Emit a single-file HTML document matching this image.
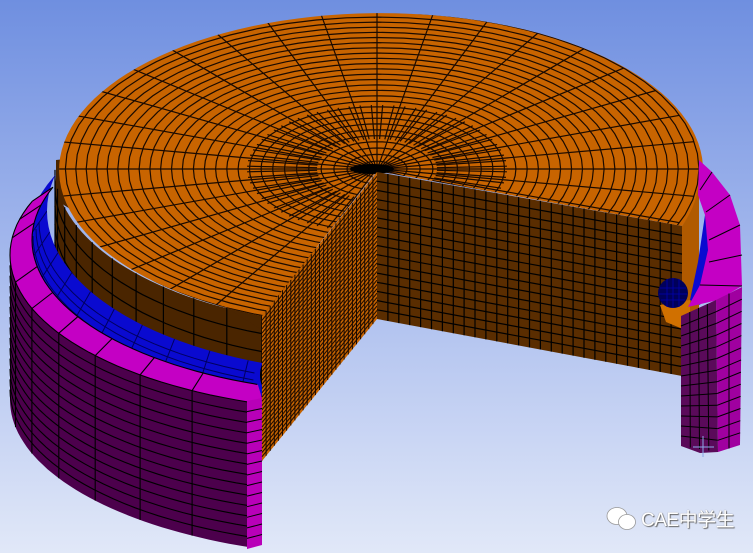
<!DOCTYPE html>
<html><head><meta charset="utf-8"><style>
html,body{margin:0;padding:0;width:753px;height:553px;overflow:hidden;background:#fff}
svg{display:block}
.wm{position:absolute;left:641px;top:505px;font:19px "Liberation Sans","Noto Sans CJK SC",sans-serif;color:#fff;text-shadow:1px 1px 1px #666,0 0 1px #888;letter-spacing:-0.5px}
</style></head><body>
<svg id="s" width="753" height="553" viewBox="0 0 753 553" xmlns="http://www.w3.org/2000/svg">
<defs>
<linearGradient id="bg" x1="0" y1="0" x2="0" y2="1">
<stop offset="0" stop-color="#6f8fe0"/><stop offset="0.5" stop-color="#a9bcee"/><stop offset="1" stop-color="#e1e8f8"/>
</linearGradient>
<clipPath id="ctop"><path d="M377,171 L262,316 A322 157 0 1 1 682,226 Z"/></clipPath>
<clipPath id="crect"><rect x="0" y="0" width="268" height="553"/></clipPath>
<clipPath id="cblue"><path clip-rule="evenodd" d="M0,0H753V553H0Z M47,211 A330 162 0 1 0 707,211 A330 162 0 1 0 47,211Z"/></clipPath>
</defs>
<rect width="753" height="553" fill="url(#bg)"/>
<path d="M55,169 A322 157 0 0 0 262,316 L262,461 A322 157 0 0 1 55,314 Z" fill="#4a2500"/>
<polygon points="56,160 150,150 320,250 262,330 56,200" fill="#4a2500"/>
<g id="sideg" stroke="#000" stroke-width="1.2" fill="none"></g>
<g clip-path="url(#crect)"><g clip-path="url(#cblue)"><ellipse cx="377" cy="240" rx="350" ry="165" fill="#0a0ad0"/>
<g id="blueg" stroke="#000060" stroke-width="1" fill="none"></g></g></g>
<path id="ringtop" fill="#c400c4"/>
<path id="ringside" fill="#4c004c"/>
<g id="ringg" stroke="#000" stroke-width="1.1" fill="none"></g>
<polygon points="247,401 262,398 262,545 247,549" fill="#b800b8"/>
<g id="ringend" stroke="#000" stroke-width="1" fill="none"></g>
<ellipse cx="266" cy="375" rx="6" ry="14" fill="#000"/>
<path d="M377,171 L262,316 A322 157 0 1 1 682,226 Z" fill="#c86400"/>
<g id="topg" clip-path="url(#ctop)" stroke="#1a0a00" stroke-width="1.2" fill="none"></g>
<ellipse cx="372" cy="169" rx="22" ry="5" fill="#000"/>
<polygon points="377,172 262,316 262,461 377,319" fill="#c46200"/>
<g id="lfg" stroke="#1a0a00" stroke-width="1" fill="none"></g>
<polygon points="377,172 682,226 682,376 377,319" fill="#5a2d00"/>
<g id="rfg" stroke="#000" stroke-width="1.2" fill="none"></g>
<path d="M682,226 A322 157 0 0 0 699,169 L699,314 A322 157 0 0 1 682,371 Z" fill="#b05a00"/>
<polygon points="690,300 698,262 705,215 713,240 712,275 700,305" fill="#0a0ad0"/>
<polygon points="660,305 690,300 690,332 666,322" fill="#d07000"/>
<circle cx="673" cy="293" r="15" fill="#00005a"/>
<g stroke="#0000b0" stroke-width="0.8"><path d="M660,288H686M659,294H687M661,300H685M667,279V307M673,278V308M679,279V307"/></g>
<polygon points="699,160 712,172 730,195 740,225 742,286 718,300 688,307 700,285 708,250 705,215 698,195" fill="#c400c4"/>
<polygon points="716,300 742,287 740,445 718,452" fill="#a000a0"/>
<polygon points="681,316 716,300 718,452 700,453 681,446" fill="#5a0a5a"/>
<g id="rr" stroke="#000" stroke-width="1" fill="none"></g>
<path d="M703,436V457M693,447H714" stroke="#8aa8e8" stroke-width="1"/>
<g fill="#fff" stroke="#999" stroke-width="0.8">
<ellipse cx="617" cy="516" rx="10" ry="8.5"/>
<ellipse cx="627" cy="522" rx="8.5" ry="7.5"/>
</g>
</svg>
<div class="wm">CAE中学生</div>
<script>
(function(){
var NS="http://www.w3.org/2000/svg";
function fmt(a){return a.map(function(p){return p[0].toFixed(1)+","+p[1].toFixed(1)}).join(" ");}
function ln(g,pts){var p=document.createElementNS(NS,"polyline");p.setAttribute("points",fmt(pts));document.getElementById(g).appendChild(p);}
function L(a,b,t){return [a[0]+(b[0]-a[0])*t,a[1]+(b[1]-a[1])*t];}
function quad(g,A,B,C,D,nu,nv){for(var i=1;i<nu;i++){var t=i/nu;ln(g,[L(A,B,t),L(D,C,t)]);}for(var j=1;j<nv;j++){var s=j/nv;ln(g,[L(A,D,s),L(B,C,s)]);}}
var cx=377,cy=169,rx=322,ry=157,a,t,i,j,k,pts;
for(k=1;k<=28;k++){var f=Math.pow(k/28,0.9);pts=[];for(a=0;a<=64;a++){t=a/64*Math.PI*2;pts.push([cx+rx*f*Math.cos(t),cy+ry*f*Math.sin(t)]);}ln("topg",pts);}
for(a=0;a<36;a++){t=a/36*Math.PI*2;ln("topg",[[cx+8*Math.cos(t),cy+3*Math.sin(t)],[cx+rx*Math.cos(t),cy+ry*Math.sin(t)]]);}
for(a=0;a<72;a++){t=(a+0.5)/72*Math.PI*2;ln("topg",[[cx+60*Math.cos(t),cy+30*Math.sin(t)],[cx+130*Math.cos(t),cy+64*Math.sin(t)]]);}
quad("lfg",[377,172],[262,316],[262,461],[377,319],28,34);
quad("rfg",[377,172],[682,226],[682,376],[377,319],28,16);
for(t=1.936;t<Math.PI;t+=0.12){var x=cx+rx*Math.cos(t),y=cy+ry*Math.sin(t);ln("sideg",[[x,y],[x,y+145]]);}
for(j=1;j<8;j++){pts=[];for(t=1.936;t<=Math.PI+0.01;t+=0.05){pts.push([cx+rx*Math.cos(t),cy+ry*Math.sin(t)+j*18]);}ln("sideg",pts);}
var ocy=255,orx=367,ory=157,icy=240,irx=345,iry=154,h=145;
var t0=Math.PI+0.35,t1=1.925,steps=40;
function E(c,r1,r2,t){return [377+r1*Math.cos(t),c+r2*Math.sin(t)];}
var outer=[],inn=[];
for(i=0;i<=steps;i++){t=t0+(t1-t0)*i/steps;outer.push(E(ocy,orx,ory,t));inn.push(E(icy,irx,iry,t));}
var ring=outer.concat([[262,398],[258,385]]).concat(inn.slice().reverse());
document.getElementById("ringtop").setAttribute("d","M"+fmt(ring).replace(/ /g," L")+" Z");
var side=[],bot=[];for(i=0;i<=steps;i++){t=Math.PI+(t1-Math.PI)*i/steps;side.push(E(ocy,orx,ory,t));bot.push(E(ocy+h,orx,ory,t));}
document.getElementById("ringside").setAttribute("d","M"+fmt(side.concat(bot.reverse())).replace(/ /g," L")+" Z");
for(i=1;i<7;i++){t=Math.PI+(t1-Math.PI)*i/7;var p=E(ocy,orx,ory,t);ln("ringg",[p,[p[0],p[1]+h]]);ln("ringg",[p,E(icy,irx,iry,t)]);}
for(t=t0;t>Math.PI;t-=0.12){ln("ringg",[E(ocy,orx,ory,t),E(icy,irx,iry,t)]);}
for(j=1;j<14;j++){pts=[];for(i=0;i<=30;i++){t=Math.PI+(t1-Math.PI)*i/30;pts.push(E(ocy+j*h/14,orx,ory,t));}ln("ringg",pts);}
ln("ringg",outer);ln("ringg",inn);
for(j=1;j<14;j++){ln("ringend",[[247,401+j*148/14],[262,398+j*147/14]]);}
for(j=1;j<5;j++){pts=[];for(t=Math.PI;t>1.9;t-=0.05){pts.push([377+(335+j*3)*Math.cos(t),215+j*7+162*Math.sin(t)]);}ln("blueg",pts);}
for(t=Math.PI;t>1.9;t-=0.13){ln("blueg",[[377+330*Math.cos(t),211+162*Math.sin(t)],[377+350*Math.cos(t),240+165*Math.sin(t)]]);}
quad("rr",[681,316],[716,300],[718,452],[681,446],4,13);
quad("rr",[716,300],[742,287],[740,445],[718,452],2,13);
ln("rr",[[712,172],[700,190]]);ln("rr",[[730,195],[706,212]]);ln("rr",[[740,225],[709,240]]);ln("rr",[[742,255],[709,262]]);ln("rr",[[742,286],[700,285]]);
})();
</script>
</body></html>
